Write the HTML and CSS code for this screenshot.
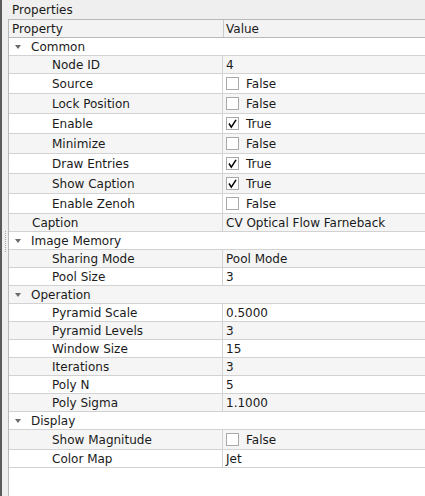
FILE: index.html
```html
<!DOCTYPE html>
<html>
<head>
<meta charset="utf-8">
<link rel="stylesheet" href="styles.css">
</head>
<body>
<div class="window">
  <div class="edge"></div>
  <div class="gutter"><div class="grip"></div></div>
  <div class="main">
    <div class="title">Properties</div>
    <div class="tree">
      <div class="header">
        <div class="hcell name">Property</div>
        <div class="hcell val">Value</div>
      </div>

      <div class="row group"><div class="gname"><span class="arrow"></span>Common</div></div>
      <div class="row alt"><div class="name child">Node ID</div><div class="val">4</div></div>
      <div class="row tall"><div class="name child">Source</div><div class="val"><span class="cb"></span>False</div></div>
      <div class="row tall alt"><div class="name child">Lock Position</div><div class="val"><span class="cb"></span>False</div></div>
      <div class="row tall"><div class="name child">Enable</div><div class="val"><span class="cb"><svg viewBox="0 0 13 13" width="13" height="13"><path d="M3 6.5 L5.3 10.2 L10 2.8" fill="none" stroke="#000" stroke-width="1.5"/></svg></span>True</div></div>
      <div class="row tall alt"><div class="name child">Minimize</div><div class="val"><span class="cb"></span>False</div></div>
      <div class="row tall"><div class="name child">Draw Entries</div><div class="val"><span class="cb"><svg viewBox="0 0 13 13" width="13" height="13"><path d="M3 6.5 L5.3 10.2 L10 2.8" fill="none" stroke="#000" stroke-width="1.5"/></svg></span>True</div></div>
      <div class="row tall alt"><div class="name child">Show Caption</div><div class="val"><span class="cb"><svg viewBox="0 0 13 13" width="13" height="13"><path d="M3 6.5 L5.3 10.2 L10 2.8" fill="none" stroke="#000" stroke-width="1.5"/></svg></span>True</div></div>
      <div class="row tall"><div class="name child">Enable Zenoh</div><div class="val"><span class="cb"></span>False</div></div>
      <div class="row alt"><div class="name top">Caption</div><div class="val">CV Optical Flow Farneback</div></div>

      <div class="row group"><div class="gname"><span class="arrow"></span>Image Memory</div></div>
      <div class="row alt"><div class="name child">Sharing Mode</div><div class="val">Pool Mode</div></div>
      <div class="row"><div class="name child">Pool Size</div><div class="val">3</div></div>

      <div class="row group alt"><div class="gname"><span class="arrow"></span>Operation</div></div>
      <div class="row"><div class="name child">Pyramid Scale</div><div class="val">0.5000</div></div>
      <div class="row alt"><div class="name child">Pyramid Levels</div><div class="val">3</div></div>
      <div class="row"><div class="name child">Window Size</div><div class="val">15</div></div>
      <div class="row alt"><div class="name child">Iterations</div><div class="val">3</div></div>
      <div class="row"><div class="name child">Poly N</div><div class="val">5</div></div>
      <div class="row alt"><div class="name child">Poly Sigma</div><div class="val">1.1000</div></div>

      <div class="row group"><div class="gname"><span class="arrow"></span>Display</div></div>
      <div class="row tall alt"><div class="name child">Show Magnitude</div><div class="val"><span class="cb"></span>False</div></div>
      <div class="row"><div class="name child">Color Map</div><div class="val">Jet</div></div>
    </div>
  </div>
</div>
</body>
</html>
```

FILE: styles.css
```css
html, body {
  margin: 0;
  padding: 0;
}
body {
  background: #efefef;
  font-family: "DejaVu Sans", "Liberation Sans", sans-serif;
  font-size: 12px;
  color: #1a1a1a;
}
.window {
  display: flex;
  height: 496px;
  overflow: hidden;
}
.edge {
  width: 2px;
  background: #5a5a5a;
}
.gutter {
  width: 6px;
  display: flex;
  align-items: center;
  justify-content: center;
}
.grip {
  width: 1px;
  height: 22px;
  margin-top: -12px;
  background: repeating-linear-gradient(#a8a8a8 0 1px, transparent 1px 2px);
}
.main {
  flex: 1;
  display: flex;
  flex-direction: column;
  min-width: 0;
}
.title {
  height: 18px;
  padding-top: 1px;
  line-height: 19px;
  padding-left: 4px;
  white-space: nowrap;
}
.tree {
  flex: 1;
  background: #fff;
  border-top: 1px solid #b9b9b9;
  border-left: 1px solid #b9b9b9;
}
.header {
  display: flex;
  height: 17px;
  line-height: 19px;
  background: #f3f3f3;
  border-bottom: 1px solid #b9b9b9;
}
.hcell {
  white-space: nowrap;
}
.header .name {
  width: 211px;
  padding-left: 3px;
  border-right: 1px solid #c9c9c9;
}
.header .val {
  padding-left: 2px;
}
.row {
  display: flex;
  height: 17px;
  line-height: 19px;
  border-bottom: 1px solid #d2d2d2;
  background: #fff;
  white-space: nowrap;
}
.row.alt {
  background: #f5f5f5;
}
.row.tall {
  height: 19px;
  line-height: 21px;
}
.row .name {
  width: 214px;
  box-sizing: border-box;
  border-right: 1px solid #d2d2d2;
}
.name.child {
  padding-left: 43px;
}
.name.top {
  padding-left: 23px;
}
.row .val {
  flex: 1;
  padding-left: 3px;
  display: flex;
  align-items: flex-start;
}
.gname {
  display: flex;
  align-items: flex-start;
  padding-left: 6px;
}
.arrow {
  width: 0;
  height: 0;
  margin-top: 7px;
  border-left: 3.5px solid transparent;
  border-right: 3.5px solid transparent;
  border-top: 4px solid #6a6a6a;
  margin-right: 10px;
}
.cb {
  width: 11px;
  height: 11px;
  margin-top: 3px;
  border: 1px solid #a9a9a9;
  background: #fff;
  margin-right: 7px;
  position: relative;
  flex: none;
}
.cb svg {
  position: absolute;
  left: -1px;
  top: -1px;
}
```
